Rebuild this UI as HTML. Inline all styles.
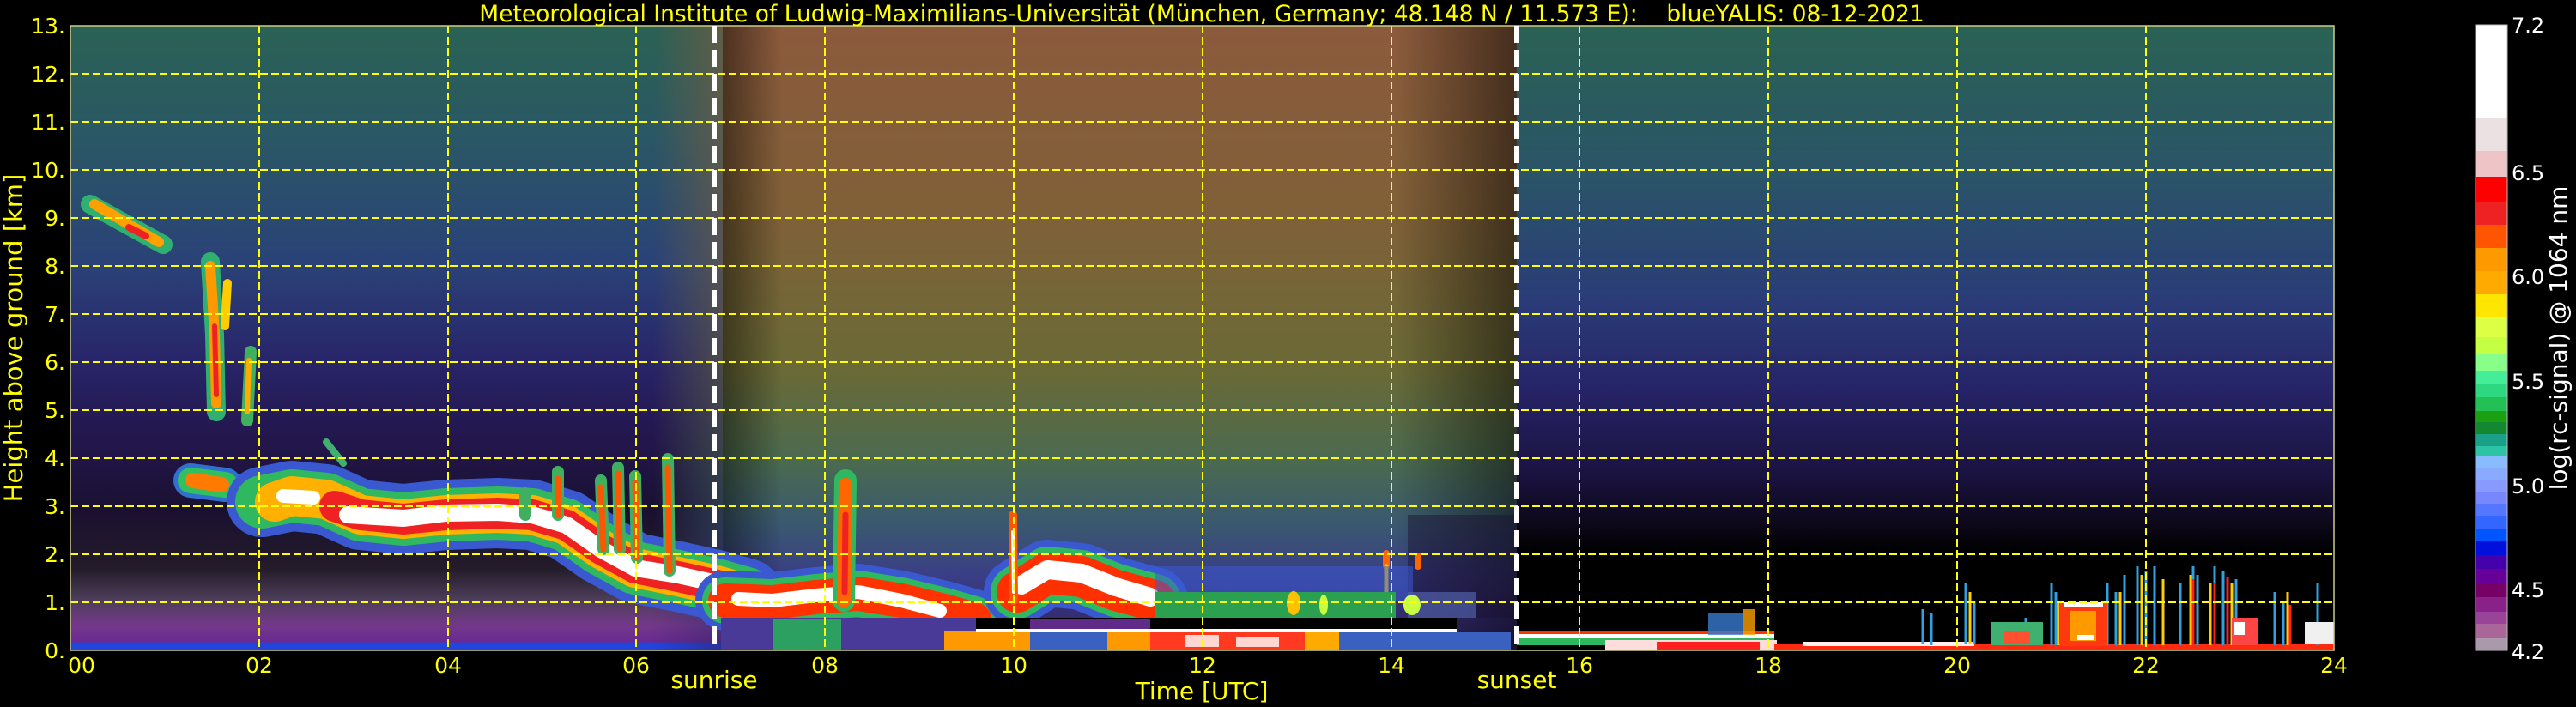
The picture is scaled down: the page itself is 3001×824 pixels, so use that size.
<!DOCTYPE html>
<html><head><meta charset="utf-8"><style>
html,body{margin:0;padding:0;background:#000;width:3001px;height:824px;overflow:hidden}
svg{display:block}
text{font-family:"DejaVu Sans","Liberation Sans",sans-serif}
</style></head><body>
<svg width="3001" height="824" viewBox="0 0 3001 824" xmlns="http://www.w3.org/2000/svg">
<defs>
<linearGradient id="nl" x1="0" y1="30" x2="0" y2="758" gradientUnits="userSpaceOnUse">
<stop offset="0" stop-color="#2a6254"/><stop offset="0.17" stop-color="#2a5864"/>
<stop offset="0.38" stop-color="#2a4278"/><stop offset="0.53" stop-color="#28266a"/>
<stop offset="0.64" stop-color="#241852"/><stop offset="0.78" stop-color="#1a1030"/>
<stop offset="0.87" stop-color="#241c2a"/><stop offset="0.92" stop-color="#4e3e5a"/>
<stop offset="0.96" stop-color="#74388a"/><stop offset="0.985" stop-color="#6a2a90"/>
<stop offset="0.99" stop-color="#2244dd"/><stop offset="1" stop-color="#2244dd"/>
</linearGradient>
<linearGradient id="dy" x1="0" y1="30" x2="0" y2="758" gradientUnits="userSpaceOnUse">
<stop offset="0" stop-color="#8c5a3c"/><stop offset="0.3" stop-color="#806038"/>
<stop offset="0.55" stop-color="#6a6a36"/><stop offset="0.7" stop-color="#4a6a50"/>
<stop offset="0.8" stop-color="#3a5870"/><stop offset="0.88" stop-color="#3a3e86"/>
<stop offset="1" stop-color="#302060"/>
</linearGradient>
<linearGradient id="nr" x1="0" y1="30" x2="0" y2="758" gradientUnits="userSpaceOnUse">
<stop offset="0" stop-color="#2a6254"/><stop offset="0.24" stop-color="#2a5468"/>
<stop offset="0.44" stop-color="#2a3c78"/><stop offset="0.58" stop-color="#262468"/>
<stop offset="0.72" stop-color="#1a1240"/><stop offset="0.8" stop-color="#0c0818"/>
<stop offset="0.84" stop-color="#000"/><stop offset="1" stop-color="#000"/>
</linearGradient>
<linearGradient id="hm" x1="760" y1="0" x2="1767" y2="0" gradientUnits="userSpaceOnUse">
<stop offset="0" stop-color="#fff" stop-opacity="0"/><stop offset="0.15" stop-color="#fff" stop-opacity="1"/>
<stop offset="0.86" stop-color="#fff" stop-opacity="1"/><stop offset="1" stop-color="#fff" stop-opacity="0.5"/>
</linearGradient>
<mask id="dm"><rect x="760" y="30" width="1007" height="728" fill="url(#hm)"/></mask>
<clipPath id="pc"><rect x="82" y="30" width="2637" height="728"/></clipPath>
</defs>

<g clip-path="url(#pc)">
<rect x="82" y="30" width="760" height="728" fill="url(#nl)"/>
<rect x="1767" y="30" width="952" height="728" fill="url(#nr)"/>
<rect x="760" y="30" width="1007" height="728" fill="url(#dy)" mask="url(#dm)"/>
<rect x="1640" y="600" width="127" height="120" fill="#1a1030" opacity="0.45"/>

<g stroke-linecap="round" stroke-linejoin="round" fill="none">
<path d="M105,238 L190,285" stroke="#30b070" stroke-width="22"/>
<path d="M110,238 L185,282" stroke="#ffa000" stroke-width="12"/>
<path d="M150,265 L170,275" stroke="#ee2222" stroke-width="8"/>
<path d="M245,305 L250,390 L252,480" stroke="#30b070" stroke-width="22"/>
<path d="M245,310 L250,390 L252,470" stroke="#ff9900" stroke-width="12"/>
<path d="M250,380 L252,460" stroke="#ee2222" stroke-width="6"/>
<path d="M265,330 L262,380" stroke="#ffcc00" stroke-width="10"/>
<path d="M292,410 L288,490" stroke="#40b060" stroke-width="14"/>
<path d="M290,420 L288,480" stroke="#ffaa00" stroke-width="6"/>
<path d="M222,560 L262,565" stroke="#3070d0" stroke-width="40"/>
<path d="M222,560 L262,565" stroke="#30c060" stroke-width="30"/>
<path d="M225,560 L258,565" stroke="#ff7a00" stroke-width="18"/>
<path d="M380,515 L400,540" stroke="#40b070" stroke-width="8"/>
<path d="M305,585 L340,578 L380,582 L420,600 L470,605 L520,600 L580,598 L620,600 L660,612 L700,640 L740,662 L790,672 L835,682 L870,692" stroke="#3a58d0" stroke-width="82"/>
<path d="M305,585 L340,578 L380,582 L420,600 L470,605 L520,600 L580,598 L620,600 L660,612 L700,640 L740,662 L790,672 L835,682 L870,692" stroke="#30b860" stroke-width="62"/>
<path d="M320,585 L340,578 L380,582 L420,600 L470,605 L520,600 L580,598 L620,600 L660,612 L700,640 L740,662 L790,672 L835,682 L870,692" stroke="#ffb000" stroke-width="46"/>
<path d="M390,590 L420,600 L470,605 L520,600 L580,598 L620,600 L660,612 L700,640 L740,662 L790,672 L835,682 L870,692" stroke="#ee2222" stroke-width="36"/>
<path d="M330,578 L365,580" stroke="#ffffff" stroke-width="16"/>
<path d="M405,600 L470,604 L520,598 L580,597 L620,600 L660,612 L700,640 L740,662 L790,670 L835,680 L860,688" stroke="#ffffff" stroke-width="20"/>
<path d="M650,600 L650,550 M703,640 L700,560 M722,640 L720,545 M742,650 L740,555 M780,665 L778,535 M612,600 L612,575" stroke="#40b060" stroke-width="14"/>
<path d="M650,600 L650,558 M703,640 L700,568 M722,640 L720,552 M742,650 L740,562 M780,665 L778,545" stroke="#ff5500" stroke-width="7"/>
<path d="M845,700 L900,702 L950,696 L1000,692 L1050,700 L1100,712 L1135,722" stroke="#3a58d0" stroke-width="70"/>
<path d="M845,700 L900,702 L950,696 L1000,692 L1050,700 L1100,712 L1135,722" stroke="#30b860" stroke-width="54"/>
<path d="M845,700 L900,702 L950,696 L1000,692 L1050,700 L1100,712 L1135,722" stroke="#ff3300" stroke-width="40"/>
<path d="M860,698 L900,700 L950,694 L1000,690 L1050,700 L1095,712" stroke="#ffffff" stroke-width="16"/>
<path d="M983,700 L985,560" stroke="#30b860" stroke-width="26"/>
<path d="M983,700 L985,565" stroke="#ff6600" stroke-width="16"/>
<path d="M984,690 L985,600" stroke="#ee2222" stroke-width="7"/>
<path d="M1185,690 L1220,668 L1260,672 L1300,688 L1345,700" stroke="#3a58d0" stroke-width="78"/>
<path d="M1185,690 L1220,668 L1260,672 L1300,688 L1345,700" stroke="#30b860" stroke-width="62"/>
<path d="M1185,690 L1220,668 L1260,672 L1300,688 L1345,700" stroke="#ff3000" stroke-width="48"/>
<path d="M1190,682 L1220,664 L1260,668 L1300,684 L1340,696" stroke="#ffffff" stroke-width="22"/>
<path d="M1181,700 L1180,600" stroke="#ff5500" stroke-width="10"/>
<path d="M1181,690 L1180,620" stroke="#ffffff" stroke-width="4"/>
<path d="M1615,660 L1615,645 M1652,660 L1652,648" stroke="#ff6600" stroke-width="8"/>
<path d="M1615,700 L1615,660" stroke="#ffcc00" stroke-width="5"/>
</g>
<rect x="1346" y="660" width="300" height="40" fill="#3a5ad0" opacity="0.55"/>
<rect x="1346" y="690" width="280" height="30" fill="#2aa050"/>
<rect x="1640" y="690" width="80" height="30" fill="#5060a8" opacity="0.7"/>
<ellipse cx="1507" cy="703" rx="8" ry="14" fill="#ffc000"/>
<ellipse cx="1645" cy="705" rx="10" ry="12" fill="#c8ff40"/>
<ellipse cx="1542" cy="705" rx="5" ry="12" fill="#c8ff40"/>
<rect x="840" y="720" width="300" height="38" fill="#4a3a98"/>
<rect x="900" y="722" width="80" height="36" fill="#2ca060"/>
<rect x="1137" y="720" width="560" height="15" fill="#000"/>
<rect x="1200" y="722" width="140" height="30" fill="#602a88"/>
<rect x="1100" y="735" width="100" height="23" fill="#ff9900"/>
<rect x="1137" y="733" width="560" height="4" fill="#ffffff"/>
<rect x="1200" y="737" width="560" height="21" fill="#3a60c0"/>
<rect x="1340" y="737" width="180" height="21" fill="#ff3a20"/>
<rect x="1380" y="740" width="40" height="14" fill="#ffffff" opacity="0.8"/>
<rect x="1440" y="742" width="50" height="12" fill="#ffffff" opacity="0.8"/>
<rect x="1290" y="737" width="50" height="21" fill="#ff9900"/>
<rect x="1520" y="737" width="40" height="21" fill="#ffaa00"/>
<rect x="1767" y="738" width="300" height="6" fill="#ffffff"/>
<rect x="1767" y="744" width="300" height="8" fill="#30b860"/>
<rect x="1767" y="736" width="300" height="3" fill="#ff3300"/>
<rect x="1870" y="746" width="200" height="12" fill="#ffdddd"/>
<rect x="1930" y="748" width="120" height="10" fill="#ff2020"/>
<rect x="2067" y="750" width="652" height="8" fill="#ff2a10"/>
<rect x="2100" y="748" width="200" height="5" fill="#ffeeee"/>
<rect x="1990" y="715" width="40" height="25" fill="#3a7ad0" opacity="0.8"/>
<rect x="2030" y="710" width="14" height="30" fill="#ffa000" opacity="0.8"/>
<g stroke-width="3">
<path d="M2240,710 V750 M2250,715 V752 M2290,680 V750 M2300,700 V750 M2340,725 V752 M2360,720 V752 M2390,680 V752 M2395,690 V752 M2455,680 V752 M2465,690 V752 M2475,670 V752 M2490,660 V752 M2500,665 V752 M2510,660 V752 M2540,680 V752 M2555,660 V752 M2560,670 V752 M2580,660 V752 M2590,665 V752 M2605,675 V752 M2650,690 V752 M2660,700 V752 M2700,680 V752" stroke="#30a0e0"/>
<path d="M2295,690 V750 M2398,700 V752 M2470,690 V752 M2495,670 V752 M2520,675 V752 M2552,670 V752 M2575,680 V752 M2600,680 V752 M2665,690 V752" stroke="#ffcc00"/>
<path d="M2555,675 V752 M2580,680 V752 M2595,672 V752 M2668,705 V752" stroke="#ff2020"/>
</g>
<rect x="2320" y="725" width="60" height="27" fill="#40b070"/>
<rect x="2335" y="735" width="30" height="15" fill="#ff5030"/>
<rect x="2400" y="703" width="55" height="50" fill="#ff3a10"/>
<rect x="2412" y="712" width="30" height="35" fill="#ff9900"/>
<rect x="2405" y="702" width="45" height="5" fill="#ffffff"/>
<rect x="2420" y="740" width="20" height="6" fill="#ffffff"/>
<rect x="2600" y="720" width="30" height="32" fill="#ff4444"/>
<rect x="2603" y="725" width="12" height="15" fill="#ffffff"/>
<rect x="2685" y="725" width="34" height="25" fill="#f0f0f0"/>
</g>

<g stroke="#ffff00" stroke-width="2" stroke-dasharray="9,4" fill="none">
<path d="M82,702H2719M82,646H2719M82,590H2719M82,534H2719M82,478H2719M82,422H2719M82,366H2719M82,310H2719M82,254H2719M82,198H2719M82,142H2719M82,86H2719"/>
<path d="M302,30V758M522,30V758M741,30V758M961,30V758M1181,30V758M1401,30V758M1621,30V758M1840,30V758M2060,30V758M2280,30V758M2500,30V758"/>
</g>
<rect x="82" y="30" width="2637" height="728" fill="none" stroke="#cccc88" stroke-width="1.5"/>
<path d="M832,30V758M1767,30V758" stroke="#fff" stroke-width="6" stroke-dasharray="20,8"/>

<text x="1400" y="25" fill="#ffff00" font-size="26.5" text-anchor="middle" xml:space="preserve">Meteorological Institute of Ludwig-Maximilians-Universität (München, Germany; 48.148 N / 11.573 E):    blueYALIS: 08-12-2021</text>
<g fill="#ffff00" font-size="25" text-anchor="end">
<text x="76" y="767">0.</text><text x="76" y="711">1.</text><text x="76" y="655">2.</text><text x="76" y="599">3.</text><text x="76" y="543">4.</text><text x="76" y="487">5.</text><text x="76" y="431">6.</text><text x="76" y="375">7.</text><text x="76" y="319">8.</text><text x="76" y="263">9.</text><text x="76" y="207">10.</text><text x="76" y="151">11.</text><text x="76" y="95">12.</text><text x="76" y="39">13.</text>
</g>
<text transform="translate(26,394) rotate(-90)" fill="#ffff00" font-size="29" text-anchor="middle">Height above ground [km]</text>
<g fill="#ffff00" font-size="25" text-anchor="middle">
<text x="95" y="784">00</text><text x="302" y="784">02</text><text x="522" y="784">04</text><text x="741" y="784">06</text><text x="961" y="784">08</text><text x="1181" y="784">10</text><text x="1401" y="784">12</text><text x="1621" y="784">14</text><text x="1840" y="784">16</text><text x="2060" y="784">18</text><text x="2280" y="784">20</text><text x="2500" y="784">22</text><text x="2719" y="784">24</text>
</g>
<g fill="#ffff00" font-size="28" text-anchor="middle">
<text x="832" y="802">sunrise</text><text x="1767" y="802">sunset</text>
<text x="1400" y="815">Time [UTC]</text>
</g>

<g>
<rect x="2884" y="29" width="37" height="109" fill="#ffffff"/>
<rect x="2884" y="138" width="37" height="38" fill="#ebe0e2"/>
<rect x="2884" y="176" width="37" height="30" fill="#efc4c6"/>
<rect x="2884" y="206" width="37" height="29" fill="#ff0000"/>
<rect x="2884" y="235" width="37" height="27" fill="#ee2222"/>
<rect x="2884" y="262" width="37" height="27" fill="#ff5500"/>
<rect x="2884" y="289" width="37" height="27" fill="#ff9900"/>
<rect x="2884" y="316" width="37" height="27" fill="#ffaa00"/>
<rect x="2884" y="343" width="37" height="26" fill="#ffe600"/>
<rect x="2884" y="369" width="37" height="24" fill="#ddff44"/>
<rect x="2884" y="393" width="37" height="20" fill="#c4ff44"/>
<rect x="2884" y="413" width="37" height="19" fill="#88ff88"/>
<rect x="2884" y="432" width="37" height="16" fill="#44ee99"/>
<rect x="2884" y="448" width="37" height="15" fill="#2ed880"/>
<rect x="2884" y="463" width="37" height="16" fill="#22c055"/>
<rect x="2884" y="479" width="37" height="13" fill="#1aa010"/>
<rect x="2884" y="492" width="37" height="14" fill="#148830"/>
<rect x="2884" y="506" width="37" height="14" fill="#1aa088"/>
<rect x="2884" y="520" width="37" height="12" fill="#2cc4a4"/>
<rect x="2884" y="532" width="37" height="14" fill="#88bbff"/>
<rect x="2884" y="546" width="37" height="13" fill="#88aaff"/>
<rect x="2884" y="559" width="37" height="14" fill="#8899ff"/>
<rect x="2884" y="573" width="37" height="14" fill="#7788ff"/>
<rect x="2884" y="587" width="37" height="14" fill="#5577ff"/>
<rect x="2884" y="601" width="37" height="15" fill="#3366ff"/>
<rect x="2884" y="616" width="37" height="15" fill="#0055ff"/>
<rect x="2884" y="631" width="37" height="16" fill="#0011dd"/>
<rect x="2884" y="647" width="37" height="16" fill="#4400aa"/>
<rect x="2884" y="663" width="37" height="16" fill="#660099"/>
<rect x="2884" y="679" width="37" height="17" fill="#770066"/>
<rect x="2884" y="696" width="37" height="17" fill="#882288"/>
<rect x="2884" y="713" width="37" height="14" fill="#994499"/>
<rect x="2884" y="727" width="37" height="17" fill="#aa6699"/>
<rect x="2884" y="744" width="37" height="14" fill="#aa99aa"/>
<rect x="2884" y="29" width="37" height="729" fill="none" stroke="#bbb" stroke-width="1"/>
</g>
<g fill="#ffffff" font-size="24">
<text x="2926" y="38">7.2</text><text x="2926" y="210">6.5</text><text x="2926" y="331">6.0</text><text x="2926" y="453">5.5</text><text x="2926" y="575">5.0</text><text x="2926" y="696">4.5</text><text x="2926" y="768">4.2</text>
</g>
<text transform="translate(2990,394) rotate(-90)" fill="#ffffff" font-size="28" text-anchor="middle">log(rc-signal) @ 1064 nm</text>
</svg>
</body></html>
